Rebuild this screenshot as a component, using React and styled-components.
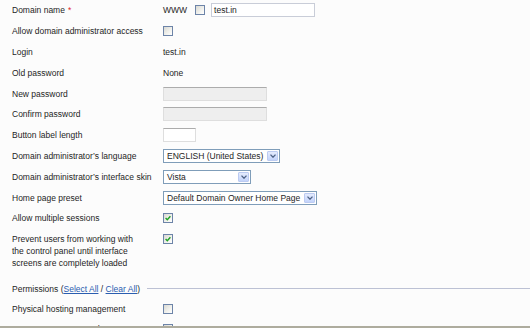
import React from "react";
import styled, { createGlobalStyle } from "styled-components";

const GlobalStyle = createGlobalStyle`
  html, body {
    margin: 0;
    padding: 0;
    background: #fcfcfc;
  }
  body {
    font-family: "Liberation Sans", Arial, sans-serif;
    font-size: 8.5px;
    color: #1e1e1e;
  }
`;

const Page = styled.div`
  height: 328px;
  box-sizing: border-box;
  overflow: hidden;
  background: #fcfcfc;
  border-bottom: 2px solid #aeac9e;
`;

const Row = styled.div`
  display: grid;
  grid-template-columns: 151px 1fr;
  padding-left: 12px;
  min-height: 20.8px;
  align-items: ${(p) => (p.$top ? "start" : "center")};
  padding-top: ${(p) => (p.$top ? "4px" : "0")};
  padding-bottom: ${(p) => (p.$top ? "4px" : "0")};
  line-height: 12px;
`;

const Label = styled.div`
  white-space: nowrap;
`;

const Required = styled.span`
  color: #e0262a;
  margin-left: 3px;
`;

const Value = styled.div`
  display: flex;
  align-items: center;
  gap: 8px;
`;

const Checkbox = styled.span`
  display: inline-flex;
  align-items: center;
  justify-content: center;
  width: 10px;
  height: 10px;
  box-sizing: border-box;
  border: 1px solid #6d84a8;
  background: linear-gradient(135deg, #d9d9d3 0%, #f2f2ee 60%, #ffffff 100%);
  margin-top: ${(p) => (p.$top ? "1px" : "0")};
`;

const TextInput = styled.div`
  width: ${(p) => p.$width || 104}px;
  height: 14px;
  box-sizing: border-box;
  padding: 0 2px;
  margin-left: ${(p) => (p.$plain ? "-2px" : "0")};
  line-height: 12px;
  background: ${(p) => (p.$disabled ? "#eeeeee" : "#ffffff")};
  border: 1px solid ${(p) => (p.$plain ? "#c9cdd8" : "#dedede")};
  border-top-color: ${(p) => (p.$plain ? "#c9cdd8" : "#acacac")};
`;

const SelectBox = styled.div`
  width: ${(p) => p.$width}px;
  height: 14px;
  box-sizing: border-box;
  display: flex;
  align-items: center;
  justify-content: space-between;
  border: 1px solid #7f9db9;
  background: #ffffff;
  padding-left: 3px;
  white-space: nowrap;
`;

const Arrow = styled.span`
  width: 11px;
  height: 10px;
  margin-right: 1px;
  box-sizing: border-box;
  display: flex;
  align-items: center;
  justify-content: center;
  border: 1px solid #bccbf2;
  border-radius: 1px;
  background: linear-gradient(180deg, #e4ebfd 0%, #c4d4fb 100%);
`;

const SectionHead = styled.div`
  display: flex;
  align-items: center;
  padding-left: 12px;
  margin-top: 6px;
  height: 19.5px;
  white-space: nowrap;
`;

const Rule = styled.div`
  flex: 1;
  height: 1px;
  margin-left: 7px;
  background: #bcc1d4;
`;

const Link = styled.a`
  color: #2a5db0;
  text-decoration: underline;
`;

function Check({ checked, top }) {
  return (
    <Checkbox $top={top}>
      {checked && (
        <svg width="6" height="6" viewBox="0 0 6 6">
          <path d="M0.6 3 L2.3 4.7 L5.4 1.2" stroke="#1fa323" strokeWidth="1.4" fill="none" />
        </svg>
      )}
    </Checkbox>
  );
}

function Select({ width, value }) {
  return (
    <SelectBox $width={width}>
      <span>{value}</span>
      <Arrow>
        <svg width="6" height="4" viewBox="0 0 6 4">
          <path d="M0.5 0.6 L3 3.2 L5.5 0.6" stroke="#4d6185" strokeWidth="1.3" fill="none" />
        </svg>
      </Arrow>
    </SelectBox>
  );
}

export default function App() {
  return (
    <Page>
      <GlobalStyle />
      <Row>
        <Label>
          Domain name<Required>*</Required>
        </Label>
        <Value>
          <span>WWW</span>
          <Check />
          <TextInput $plain>test.in</TextInput>
        </Value>
      </Row>
      <Row>
        <Label>Allow domain administrator access</Label>
        <Value>
          <Check />
        </Value>
      </Row>
      <Row>
        <Label>Login</Label>
        <Value>test.in</Value>
      </Row>
      <Row>
        <Label>Old password</Label>
        <Value>None</Value>
      </Row>
      <Row>
        <Label>New password</Label>
        <Value>
          <TextInput $disabled />
        </Value>
      </Row>
      <Row>
        <Label>Confirm password</Label>
        <Value>
          <TextInput $disabled />
        </Value>
      </Row>
      <Row>
        <Label>Button label length</Label>
        <Value>
          <TextInput $width={33} />
        </Value>
      </Row>
      <Row>
        <Label>Domain administrator’s language</Label>
        <Value>
          <Select width={117} value="ENGLISH (United States)" />
        </Value>
      </Row>
      <Row>
        <Label>Domain administrator’s interface skin</Label>
        <Value>
          <Select width={88} value="Vista" />
        </Value>
      </Row>
      <Row>
        <Label>Home page preset</Label>
        <Value>
          <Select width={154} value="Default Domain Owner Home Page" />
        </Value>
      </Row>
      <Row>
        <Label>Allow multiple sessions</Label>
        <Value>
          <Check checked />
        </Value>
      </Row>
      <Row $top>
        <Label>
          Prevent users from working with
          <br />
          the control panel until interface
          <br />
          screens are completely loaded
        </Label>
        <Value>
          <Check checked top />
        </Value>
      </Row>
      <SectionHead>
        <span>
          Permissions (<Link href="#">Select All</Link> / <Link href="#">Clear All</Link>)
        </span>
        <Rule />
      </SectionHead>
      <Row>
        <Label>Physical hosting management</Label>
        <Value>
          <Check />
        </Value>
      </Row>
      <Row>
        <Label>Manage FTP password</Label>
        <Value>
          <Check />
        </Value>
      </Row>
    </Page>
  );
}
